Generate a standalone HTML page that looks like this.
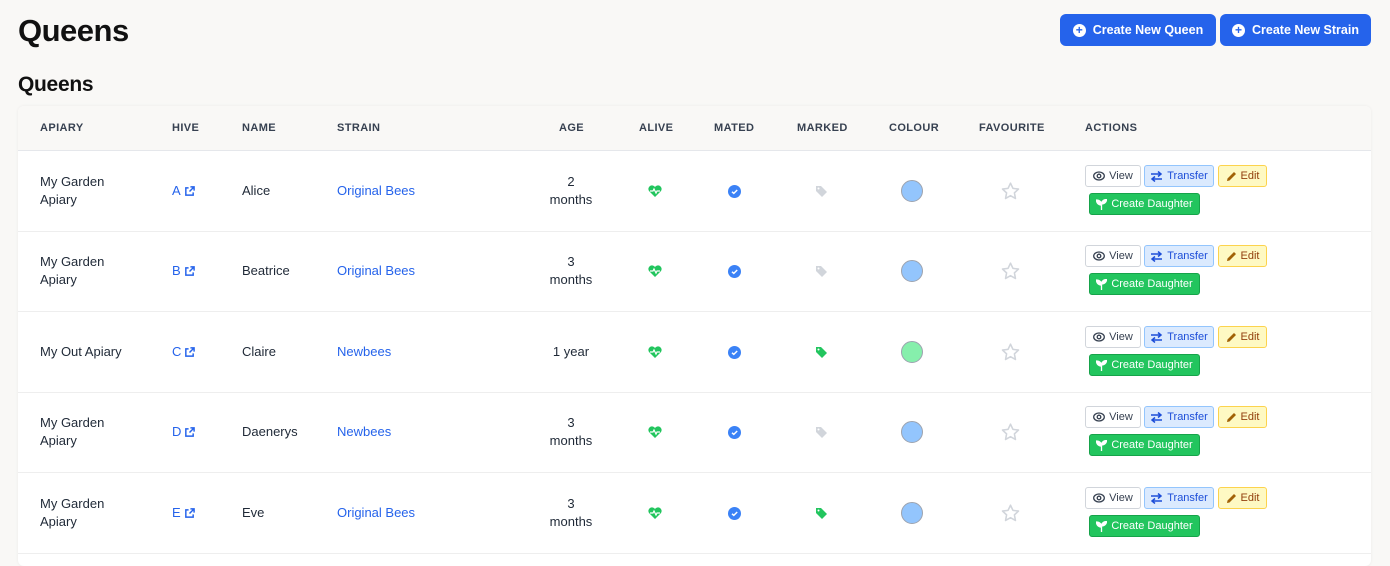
<!DOCTYPE html><html><head><meta charset="utf-8"><style>
*{box-sizing:border-box;margin:0;padding:0}
body{width:1390px;height:560px;overflow:hidden;background:#f9f8f6;font-family:"Liberation Sans",sans-serif;color:#1f2937;position:relative}
h1{position:absolute;left:18px;top:13px;font-size:31px;font-weight:bold;color:#111;letter-spacing:-0.5px}
h2{position:absolute;left:18px;top:73px;font-size:21px;font-weight:bold;color:#111;letter-spacing:-0.3px}
.btn{position:absolute;top:14px;height:32px;background:#2563eb;color:#fff;border-radius:6px;font-size:12.5px;font-weight:bold;display:flex;align-items:center;justify-content:center;gap:7px}
.pl{width:13px;height:13px;border-radius:50%;background:#fff;color:#2563eb;font-size:12px;line-height:13px;text-align:center;font-weight:bold}
.card{position:absolute;left:18px;top:106px;width:1353px;height:460px;background:#fff;border-radius:6px;box-shadow:0 0 3px rgba(0,0,0,.06)}
.hd{position:absolute;left:0;top:0;width:100%;height:45px;background:#f9f8f6;border-bottom:1px solid #e5e7eb;border-radius:6px 6px 0 0}
.th{position:absolute;top:16px;font-size:11px;font-weight:bold;color:#374151;letter-spacing:.4px}
.row{position:absolute;left:0;width:100%;height:81px;border-bottom:1px solid #eee;font-size:13px}
.c{position:absolute;top:0;height:80px;display:flex;align-items:center;line-height:18px}
.lnk{color:#2563eb}
.b{position:absolute;height:22px;border-radius:3px;font-size:11px;display:flex;align-items:center;justify-content:center;gap:4px;border:1px solid}
</style></head><body>
<h1>Queens</h1>
<div class="btn" style="left:1060px;width:156px"><span class="pl">+</span>Create New Queen</div>
<div class="btn" style="left:1220px;width:151px"><span class="pl">+</span>Create New Strain</div>
<h2>Queens</h2>
<div class="card">
<div class="hd">
<span class="th" style="left:22px">APIARY</span><span class="th" style="left:154px">HIVE</span><span class="th" style="left:224px">NAME</span><span class="th" style="left:319px">STRAIN</span><span class="th" style="left:541px">AGE</span><span class="th" style="left:621px">ALIVE</span><span class="th" style="left:696px">MATED</span><span class="th" style="left:779px">MARKED</span><span class="th" style="left:871px">COLOUR</span><span class="th" style="left:961px">FAVOURITE</span><span class="th" style="left:1067px">ACTIONS</span>
</div>
</div>
<script>
var d=[["My Garden<br>Apiary","A","Alice","Original Bees","2<br>months",0,"#93c5fd"],["My Garden<br>Apiary","B","Beatrice","Original Bees","3<br>months",0,"#93c5fd"],["My Out Apiary","C","Claire","Newbees","1 year",1,"#86efac"],["My Garden<br>Apiary","D","Daenerys","Newbees","3<br>months",0,"#93c5fd"],["My Garden<br>Apiary","E","Eve","Original Bees","3<br>months",1,"#93c5fd"]];
var tops=[45,125,206,286,367],h="";
var ext='<svg width="11" height="11" viewBox="0 0 12 12" style="margin-left:3px"><path d="M5 2H2v8h8V7M7 1h4v4M11 1L6 6" fill="none" stroke="#2563eb" stroke-width="1.6"/></svg>';
d.forEach(function(r,i){
var tag=r[5]?"#22c55e":"#d1d5db";
h+='<div class="row" style="top:'+tops[i]+'px">'+
'<div class="c" style="left:22px">'+r[0]+'</div>'+
'<div class="c lnk" style="left:154px">'+r[1]+ext+'</div>'+
'<div class="c" style="left:224px">'+r[2]+'</div>'+
'<div class="c lnk" style="left:319px">'+r[3]+'</div>'+
'<div class="c" style="left:513px;width:80px;justify-content:center;text-align:center">'+r[4]+'</div>'+
'<div class="c" style="left:630px"><svg width="14" height="12" viewBox="0 0 14 12"><path d="M7 12L1 6A3.3 3.3 0 0 1 7 2A3.3 3.3 0 0 1 13 6Z" fill="#22c55e"/><path d="M2 6h3l1-2 2 4 1-2h3" fill="none" stroke="#fff" stroke-width="1.2"/></svg></div>'+
'<div class="c" style="left:710px"><svg width="13" height="13"><circle cx="6.5" cy="6.5" r="6.5" fill="#3b82f6"/><path d="M4 6.8l1.8 1.6L9.2 5" fill="none" stroke="#fff" stroke-width="1.5"/></svg></div>'+
'<div class="c" style="left:797px"><svg width="13" height="13" viewBox="0 0 13 13"><path d="M1 1h5l6 6-5 5-6-6Z" fill="'+tag+'"/><circle cx="3.5" cy="3.5" r="1" fill="#fff"/></svg></div>'+
'<div class="c" style="left:883px"><div style="width:22px;height:22px;border-radius:50%;background:'+r[6]+';border:1px solid #9ca3af"></div></div>'+
'<div class="c" style="left:983px"><svg width="19" height="18" viewBox="0 0 24 23"><path d="M12 1.5l3.1 6.6 7.1.9-5.2 4.9 1.3 7.1L12 17.5l-6.3 3.5L7 13.9 1.8 9l7.1-.9Z" fill="none" stroke="#d1d5db" stroke-width="2" stroke-linejoin="round"/></svg></div>'+
'<div class="b" style="left:1067px;top:14px;width:56px;border-color:#d1d5db;color:#374151;background:#fff"><svg width="12" height="10" viewBox="0 0 12 10"><ellipse cx="6" cy="5" rx="5.3" ry="4" fill="none" stroke="#374151" stroke-width="1.3"/><circle cx="6" cy="5" r="1.8" fill="none" stroke="#374151" stroke-width="1.3"/></svg>View</div>'+
'<div class="b" style="left:1126px;top:14px;width:70px;border-color:#93c5fd;color:#1d4ed8;background:#dbeafe"><svg width="13" height="11" viewBox="0 0 13 11"><path d="M1 3h10M8 0.5L11 3 8 5.5M12 8H2M5 5.5L2 8l3 2.5" fill="none" stroke="#1d4ed8" stroke-width="1.5"/></svg>Transfer</div>'+
'<div class="b" style="left:1200px;top:14px;width:49px;border-color:#fcd34d;color:#92400e;background:#fef9c3"><svg width="11" height="11" viewBox="0 0 11 11"><path d="M1 10l.5-2.5L8 1l2 2-6.5 6.5Z" fill="#a16207"/></svg>Edit</div>'+
'<div class="b" style="left:1071px;top:42px;width:111px;border-color:#16a34a;color:#fff;background:#22c55e"><svg width="11" height="11" viewBox="0 0 11 11"><path d="M5.5 11V5M5.5 6C5.5 3 3.5 1 0.5 1 0.5 4 2.5 6 5.5 6M5.5 5C5.5 2.5 7.5 0.5 10.5 0.5 10.5 3 8.5 5 5.5 5" fill="#fff" stroke="#fff" stroke-width="1.3"/></svg>Create Daughter</div>'+
'</div>';});
document.querySelector('.card').insertAdjacentHTML('beforeend',h);
</script>
</body></html>
